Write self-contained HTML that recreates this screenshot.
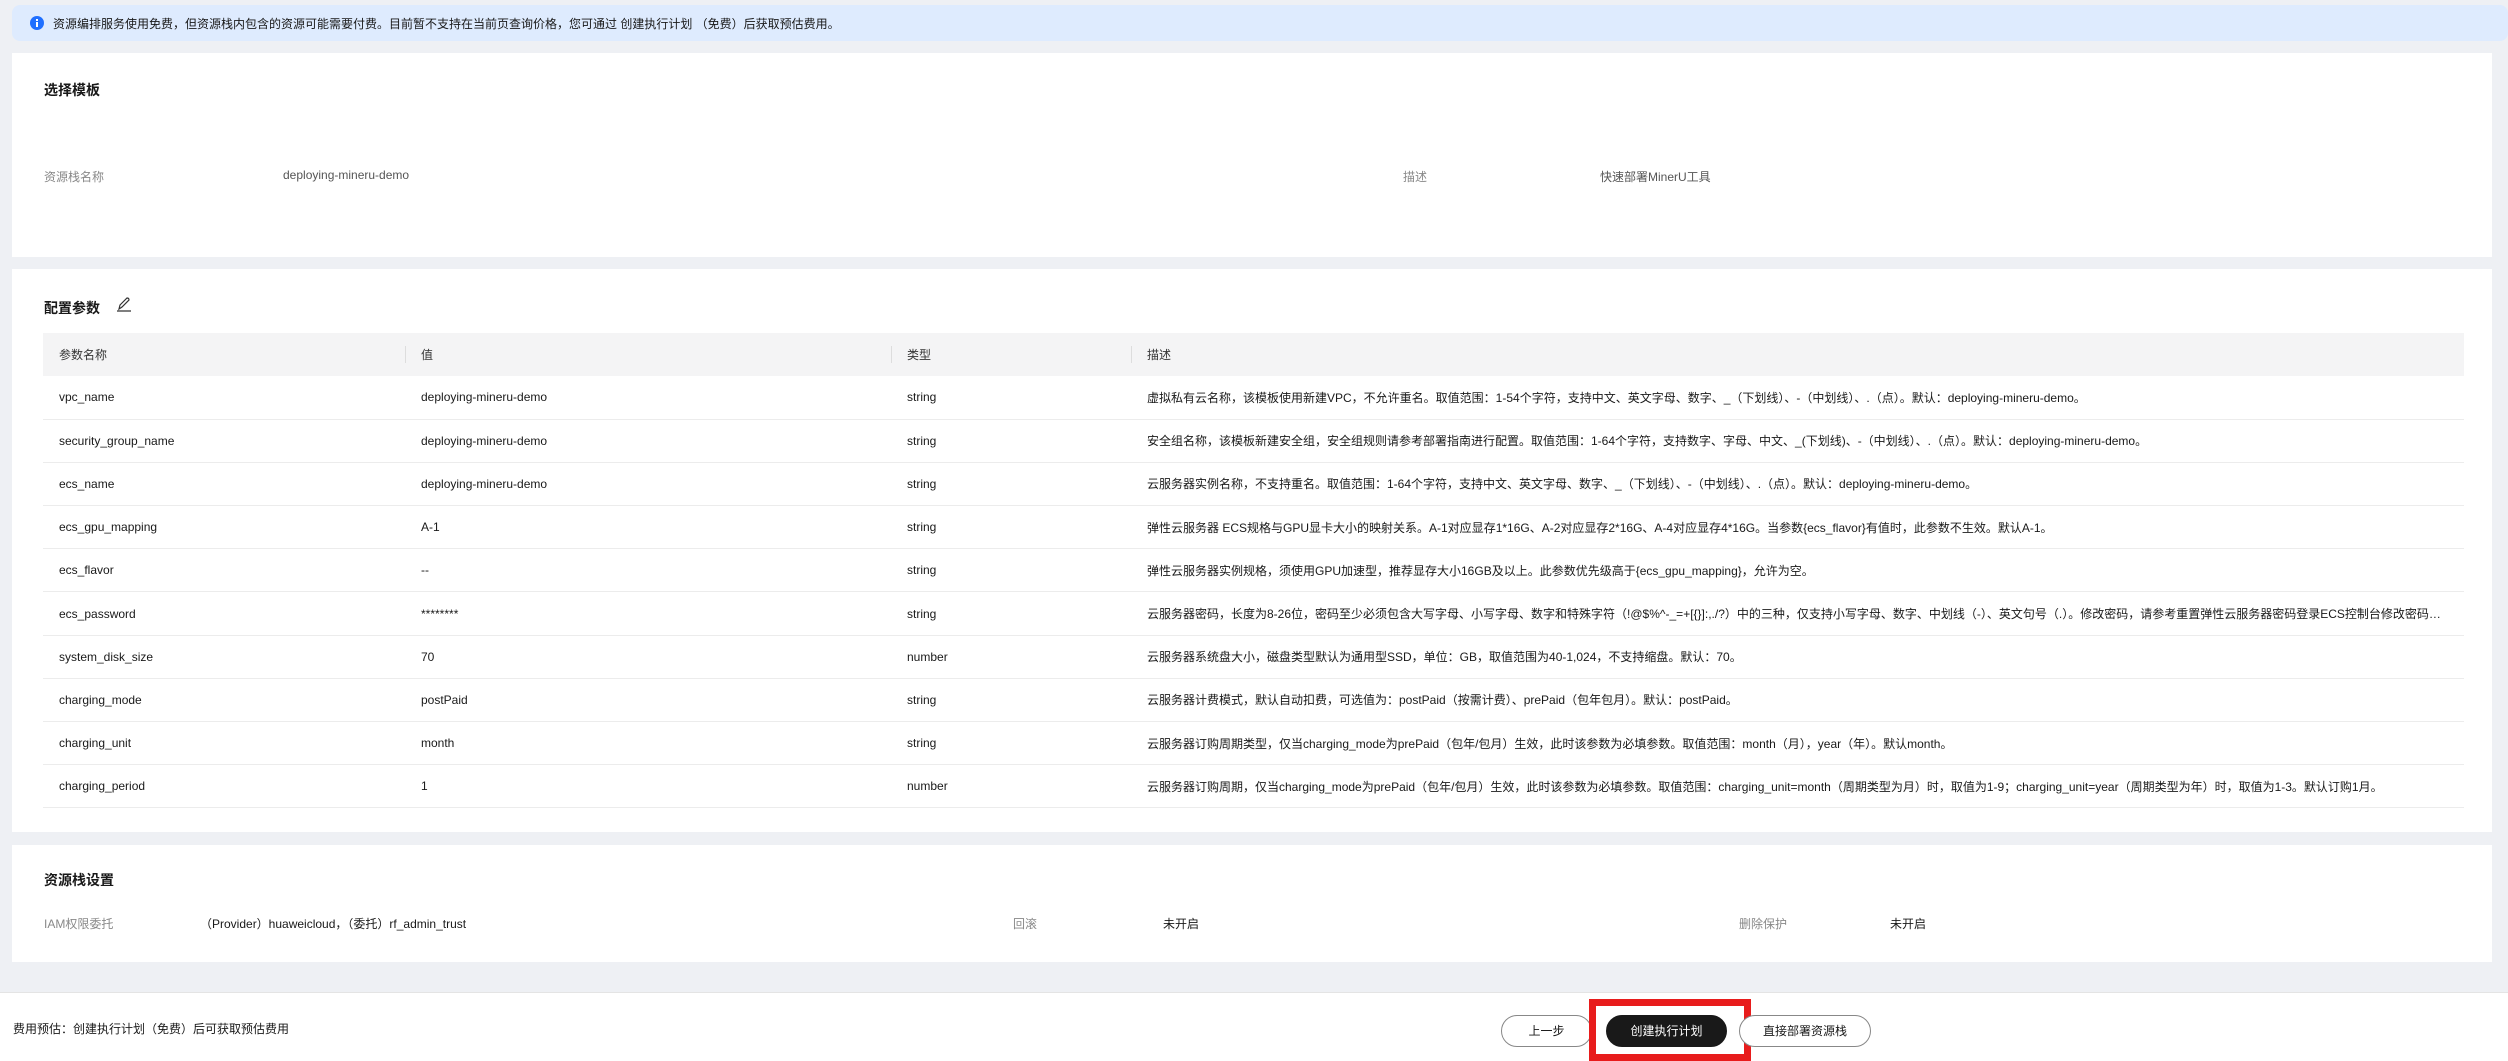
<!DOCTYPE html>
<html><head><meta charset="utf-8"><style>
*{margin:0;padding:0;box-sizing:border-box}
body{width:2508px;height:1061px;background:#eef0f4;font-family:"Liberation Sans","Noto Sans CJK SC",sans-serif;font-size:12px;color:#191919;position:relative;overflow:hidden}
.a{position:absolute;white-space:nowrap}
.info{position:absolute;left:12px;top:5px;width:2496px;height:36px;background:#deebfe;border-radius:8px}
.card{position:absolute;left:12px;width:2480px;background:#fff}
.t{font-size:14px;font-weight:bold;color:#191919}
.lab{color:#888}
table{position:absolute;left:43px;top:333px;width:2421px;border-collapse:collapse;table-layout:fixed}
td,th{height:43.2px;padding:0 16px;text-align:left;font-weight:normal;white-space:nowrap;overflow:hidden;text-overflow:ellipsis;border-bottom:1px solid #ececec;color:#191919}
th{height:43px;background:#f4f4f5;color:#333;position:relative;border-bottom:none}
th+th:before{content:"";position:absolute;left:0;top:13px;height:17px;border-left:1px solid #ddd}
.btn{position:absolute;top:1015px;height:32px;border:1px solid #888;border-radius:16px;text-align:center;line-height:30px;color:#191919;background:#fff}
</style></head><body>
<div class="info"></div>
<svg class="a" style="left:30px;top:16px" width="14" height="14"><circle cx="7" cy="7" r="7" fill="#1f6fff"/><rect x="6" y="3" width="2" height="2" fill="#fff"/><rect x="6" y="6" width="2" height="5" fill="#fff"/></svg>
<div class="a" style="left:53px;top:15px">资源编排服务使用免费，但资源栈内包含的资源可能需要付费。目前暂不支持在当前页查询价格，您可通过 创建执行计划 （免费）后获取预估费用。</div>

<div class="card" style="top:53px;height:204px"></div>
<div class="a t" style="left:44px;top:80px">选择模板</div>
<div class="a lab" style="left:44px;top:168px">资源栈名称</div>
<div class="a" style="left:283px;top:168px;color:#555">deploying-mineru-demo</div>
<div class="a lab" style="left:1403px;top:168px">描述</div>
<div class="a" style="left:1600px;top:168px;color:#555">快速部署MinerU工具</div>

<div class="card" style="top:269px;height:563px"></div>
<div class="a t" style="left:44px;top:298px">配置参数</div>
<svg class="a" style="left:116px;top:296px" width="16" height="16" fill="none" stroke="#333" stroke-width="1.2"><path d="M3 13 L4 9 L11 2 Q13 2 13 4 L6 11 Z M1 15 H15"/></svg>
<table>
<colgroup><col style="width:362px"><col style="width:486px"><col style="width:240px"><col></colgroup>
<tr><th>参数名称</th><th>值</th><th>类型</th><th>描述</th></tr>
<tr><td>vpc_name</td><td>deploying-mineru-demo</td><td>string</td><td>虚拟私有云名称，该模板使用新建VPC，不允许重名。取值范围：1-54个字符，支持中文、英文字母、数字、_（下划线）、-（中划线）、.（点）。默认：deploying-mineru-demo。</td></tr>
<tr><td>security_group_name</td><td>deploying-mineru-demo</td><td>string</td><td>安全组名称，该模板新建安全组，安全组规则请参考部署指南进行配置。取值范围：1-64个字符，支持数字、字母、中文、_(下划线)、-（中划线）、.（点）。默认：deploying-mineru-demo。</td></tr>
<tr><td>ecs_name</td><td>deploying-mineru-demo</td><td>string</td><td>云服务器实例名称，不支持重名。取值范围：1-64个字符，支持中文、英文字母、数字、_（下划线）、-（中划线）、.（点）。默认：deploying-mineru-demo。</td></tr>
<tr><td>ecs_gpu_mapping</td><td>A-1</td><td>string</td><td>弹性云服务器 ECS规格与GPU显卡大小的映射关系。A-1对应显存1*16G、A-2对应显存2*16G、A-4对应显存4*16G。当参数{ecs_flavor}有值时，此参数不生效。默认A-1。</td></tr>
<tr><td>ecs_flavor</td><td>--</td><td>string</td><td>弹性云服务器实例规格，须使用GPU加速型，推荐显存大小16GB及以上。此参数优先级高于{ecs_gpu_mapping}，允许为空。</td></tr>
<tr><td>ecs_password</td><td>********</td><td>string</td><td>云服务器密码，长度为8-26位，密码至少必须包含大写字母、小写字母、数字和特殊字符（!@$%^-_=+[{}]:,./?）中的三种，仅支持小写字母、数字、中划线（-）、英文句号（.）。修改密码，请参考重置弹性云服务器密码登录ECS控制台修改密码，或在部署完成后通过控制台重置密码。</td></tr>
<tr><td>system_disk_size</td><td>70</td><td>number</td><td>云服务器系统盘大小，磁盘类型默认为通用型SSD，单位：GB，取值范围为40-1,024，不支持缩盘。默认：70。</td></tr>
<tr><td>charging_mode</td><td>postPaid</td><td>string</td><td>云服务器计费模式，默认自动扣费，可选值为：postPaid（按需计费）、prePaid（包年包月）。默认：postPaid。</td></tr>
<tr><td>charging_unit</td><td>month</td><td>string</td><td>云服务器订购周期类型，仅当charging_mode为prePaid（包年/包月）生效，此时该参数为必填参数。取值范围：month（月），year（年）。默认month。</td></tr>
<tr><td>charging_period</td><td>1</td><td>number</td><td>云服务器订购周期，仅当charging_mode为prePaid（包年/包月）生效，此时该参数为必填参数。取值范围：charging_unit=month（周期类型为月）时，取值为1-9；charging_unit=year（周期类型为年）时，取值为1-3。默认订购1月。</td></tr>
</table>

<div class="card" style="top:845px;height:117px"></div>
<div class="a t" style="left:44px;top:870px">资源栈设置</div>
<div class="a lab" style="left:44px;top:915px">IAM权限委托</div>
<div class="a" style="left:200px;top:915px">（Provider）huaweicloud，（委托）rf_admin_trust</div>
<div class="a lab" style="left:1013px;top:915px">回滚</div>
<div class="a" style="left:1163px;top:915px">未开启</div>
<div class="a lab" style="left:1739px;top:915px">删除保护</div>
<div class="a" style="left:1890px;top:915px">未开启</div>

<div style="position:absolute;left:0;top:992px;width:2508px;height:69px;background:#fff;border-top:1px solid #e4e4e4"></div>
<div class="a" style="left:13px;top:1020px">费用预估：创建执行计划（免费）后可获取预估费用</div>
<div class="btn" style="left:1501px;width:91px">上一步</div>
<div class="a" style="left:1589px;top:999px;width:162px;height:62px;border:7px solid #e81c1c"></div>
<div class="btn" style="left:1606px;width:121px;background:#191919;border-color:#191919;color:#fff">创建执行计划</div>
<div class="btn" style="left:1739px;width:132px">直接部署资源栈</div>
</body></html>
